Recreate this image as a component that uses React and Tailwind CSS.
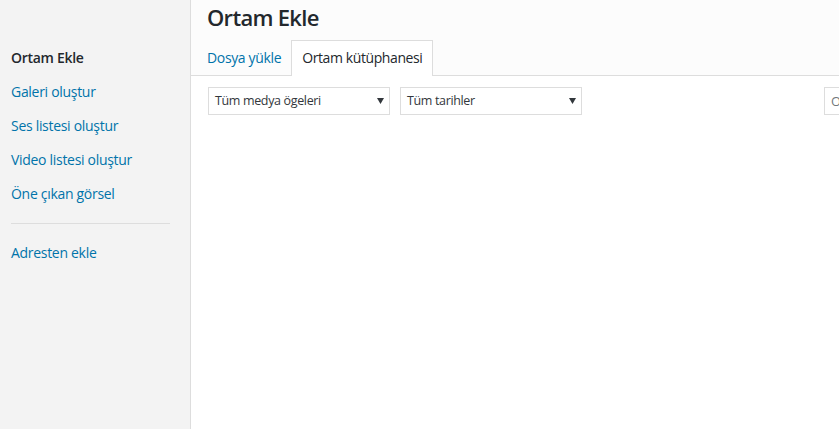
import React from 'react';

const menu = [
    { label: 'Ortam Ekle', active: true },
    { label: 'Galeri oluştur' },
    { label: 'Ses listesi oluştur' },
    { label: 'Video listesi oluştur' },
    { label: 'Öne çıkan görsel' },
];

const Select = ({ label }) => (
    <div className="relative flex h-[28px] w-[182px] shrink-0 items-center border border-[#dddddd] bg-white pl-[6px] text-[12.5px] tracking-[-0.35px] text-[#32373c]">
        <span className="pt-px">{label}</span>
        <svg className="absolute right-[5px] top-[10px]" width="7" height="6" viewBox="0 0 7 6">
            <path d="M0 0h7L3.5 6z" fill="#32373c" />
        </svg>
    </div>
);

const MediaModal = () => {
    return (
        <div className="flex h-[429px] w-[839px] overflow-hidden bg-white font-['Open_Sans',sans-serif]">
            <aside className="w-[191px] shrink-0 border-r border-[#dddddd] bg-[#f3f3f3] pt-[41px]">
                {menu.map((item) => (
                    <div
                        key={item.label}
                        className={
                            item.active
                                ? 'px-[11px] py-[8px] text-[14px] leading-[18px] tracking-[-0.3px] font-semibold text-[#23282d]'
                                : 'px-[11px] py-[8px] text-[14px] leading-[18px] tracking-[-0.3px] text-[#0073aa]'
                        }
                    >
                        {item.label}
                    </div>
                ))}
                <div className="ml-[11px] mr-[20px] my-[12px] h-px bg-[#dddddd]" />
                <div className="px-[11px] py-[8px] text-[14px] leading-[18px] tracking-[-0.3px] text-[#0073aa]">Adresten ekle</div>
            </aside>

            <main className="flex min-w-0 flex-1 flex-col">
                <div className="border-b border-[#dddddd] bg-[#fcfcfc]">
                    <h1 className="h-[40px] pl-[16px] text-[22px] leading-[34px] tracking-[-0.7px] font-semibold text-[#23282d]">Ortam Ekle</h1>
                    <div className="flex pl-[6px]">
                        <div className="h-[35px] px-[10px] text-[14px] leading-[35px] tracking-[-0.35px] text-[#0073aa]">Dosya yükle</div>
                        <div className="-mb-px h-[36px] border border-b-0 border-[#dddddd] bg-white px-[10px] text-[14px] leading-[34px] tracking-[-0.4px] text-[#23282d]">
                            Ortam kütüphanesi
                        </div>
                    </div>
                </div>

                <div className="mt-[11px] flex items-center pl-[17px]">
                    <Select label="Tüm medya ögeleri" />
                    <div className="w-[10px] shrink-0" />
                    <Select label="Tüm tarihler" />
                    <div className="flex-1" />
                    <input
                        className="-mr-[170px] h-[28px] w-[185px] shrink-0 border border-[#dddddd] bg-white px-[6px] text-[13px] text-[#32373c] placeholder:text-[#72777c] outline-none"
                        placeholder="Ortam öğelerinde ara..."
                    />
                </div>
            </main>
        </div>
    );
};

export default MediaModal;
